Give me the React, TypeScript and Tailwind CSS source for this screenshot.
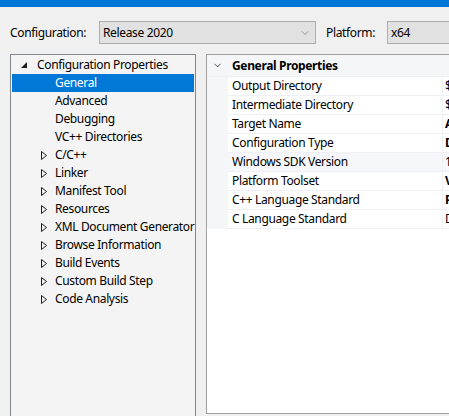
import { ChevronDown } from "lucide-react";

const font = { fontFamily: '"Segoe UI", "Noto Sans", sans-serif' };

type TreeItem = { label: string; expandable?: boolean; selected?: boolean };

const treeItems: TreeItem[] = [
  { label: "General", selected: true },
  { label: "Advanced" },
  { label: "Debugging" },
  { label: "VC++ Directories" },
  { label: "C/C++", expandable: true },
  { label: "Linker", expandable: true },
  { label: "Manifest Tool", expandable: true },
  { label: "Resources", expandable: true },
  { label: "XML Document Generator", expandable: true },
  { label: "Browse Information", expandable: true },
  { label: "Build Events", expandable: true },
  { label: "Custom Build Step", expandable: true },
  { label: "Code Analysis", expandable: true },
];

type Prop = { name: string; value: string; bold?: boolean; hover?: boolean };

const props: Prop[] = [
  { name: "Output Directory", value: "$(SolutionDir)$(Platform)\\$(Configuration)\\" },
  { name: "Intermediate Directory", value: "$(Platform)\\$(Configuration)\\" },
  { name: "Target Name", value: "Aurora", bold: true },
  { name: "Configuration Type", value: "Dynamic Library (.dll)", bold: true },
  { name: "Windows SDK Version", value: "10.0 (latest installed version)", hover: true },
  { name: "Platform Toolset", value: "Visual Studio 2019 (v142)", bold: true },
  { name: "C++ Language Standard", value: "Preview - Features from the Latest C++ Working Draft", bold: true },
  { name: "C Language Standard", value: "Default (Legacy MSVC)" },
];

function Combo({ value, width, arrow = true }: { value: string; width: string; arrow?: boolean }) {
  return (
    <div
      className={`${width} h-[23px] shrink-0 flex items-center justify-between bg-[#e1e1e1] border border-[#adadad] pl-[3px] pr-[4px] text-black`}
    >
      <span>{value}</span>
      {arrow && <ChevronDown size={12} strokeWidth={1.1} className="text-[#606060]" />}
    </div>
  );
}

function ExpandedArrow() {
  return (
    <svg width="7" height="7" viewBox="0 0 7 7" className="shrink-0">
      <polygon points="6,0 6,6 0,6" fill="#1e1e1e" />
    </svg>
  );
}

function CollapsedArrow() {
  return (
    <svg width="6" height="9" viewBox="0 0 6 9" className="shrink-0">
      <polygon points="0.5,0.5 5.5,4.5 0.5,8.5" fill="none" stroke="#1e1e1e" strokeWidth="1" />
    </svg>
  );
}

export default function App() {
  return (
    <div
      className="w-[449px] h-[416px] overflow-hidden bg-[#f0f0f0] text-black text-[12px] tracking-[-0.35px]"
      style={font}
    >
      <div className="h-[7px] bg-[#0078d7]" />

      <div className="flex items-center pt-[14px] pl-[10px]">
        <span className="w-[89px] shrink-0">Configuration:</span>
        <Combo value="Release 2020" width="w-[217px]" />
        <span className="ml-[10px] w-[61px] shrink-0">Platform:</span>
        <Combo value="x64" width="w-[120px]" arrow={false} />
      </div>

      <div className="flex gap-[10px] mt-[10px] pl-[10px]">
        {/* category tree */}
        <div className="w-[186px] h-[380px] shrink-0 border border-[#828790] bg-[#f4f4f4] p-px">
          <div className="h-[18px] flex items-center pl-[9px] gap-[9px]">
            <ExpandedArrow />
            <span>Configuration Properties</span>
          </div>
          {treeItems.map((item) => (
            <div
              key={item.label}
              className={`h-[18px] flex items-center ${
                item.selected ? "bg-[#0078d7] text-white" : ""
              }`}
            >
              <div className="w-[43px] flex justify-end pr-[8px] shrink-0">
                {item.expandable && <CollapsedArrow />}
              </div>
              <span className="whitespace-nowrap">{item.label}</span>
            </div>
          ))}
        </div>

        {/* property grid */}
        <div className="w-[300px] h-[360px] shrink-0 border border-[#a0a0a0] bg-white">
          <div className="h-[22px] flex items-center bg-[#f5f6f8] border-b border-[#f0f0f0]">
            <div className="w-[21px] flex justify-center shrink-0">
              <ChevronDown size={11} strokeWidth={1.8} className="text-[#333]" />
            </div>
            <span className="pl-[4px] font-bold">General Properties</span>
          </div>
          {props.map((p) => (
            <div key={p.name} className="h-[19px] flex">
              <div className="w-[21px] shrink-0 bg-[#f5f6f8]" />
              <div
                className={`w-[215px] shrink-0 flex items-center pl-[4px] border-b border-r border-[#eef0f3] ${
                  p.hover ? "bg-[#f5f7fa]" : ""
                }`}
              >
                {p.name}
              </div>
              <div
                className={`flex-1 flex items-center pl-[2px] whitespace-nowrap overflow-hidden border-b border-[#eef0f3] ${
                  p.bold ? "font-bold" : ""
                } ${p.hover ? "bg-[#f5f7fa]" : ""}`}
              >
                {p.value}
              </div>
            </div>
          ))}
        </div>
      </div>
    </div>
  );
}
